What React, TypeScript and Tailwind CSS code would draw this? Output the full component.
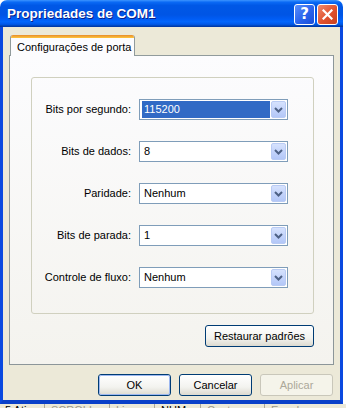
import React from 'react';

const rows = [
  { label: 'Bits por segundo:', value: '115200', selected: true },
  { label: 'Bits de dados:', value: '8' },
  { label: 'Paridade:', value: 'Nenhum' },
  { label: 'Bits de parada:', value: '1' },
  { label: 'Controle de fluxo:', value: 'Nenhum' },
];

const Combo: React.FC<{ value: string; selected?: boolean }> = ({ value, selected }) => (
  <div className="flex h-[21px] w-[149px] items-center border border-[#7f9db9] bg-white p-px">
    <div className="flex h-full flex-1 items-center pl-px">
      <span
        className={
          selected
            ? 'flex h-[17px] w-full items-center bg-[#316ac5] pl-[2px] text-white'
            : 'flex h-[17px] w-full items-center pl-[2px] text-black'
        }
      >
        {value}
      </span>
    </div>
    <div className="ml-px flex h-[17px] w-[15px] items-center justify-center rounded-[2px] border border-[#b9cbf4] bg-[linear-gradient(to_bottom,#d6e2fd,#c0d1fa_60%,#b3c7f7)]">
      <svg width="9" height="6" viewBox="0 0 9 6">
        <path d="M1 1 L4.5 4.5 L8 1" fill="none" stroke="#4d6185" strokeWidth="2" />
      </svg>
    </div>
  </div>
);

const XpButton: React.FC<{ children: React.ReactNode; width: string; primary?: boolean; disabled?: boolean }> = ({
  children,
  width,
  primary,
  disabled,
}) => {
  if (disabled) {
    return (
      <div className={`${width} flex h-[22px] items-center justify-center rounded-[3px] border border-[#c9c7ba] bg-[#f5f4ea] text-[#aca899]`}>
        {children}
      </div>
    );
  }
  return (
    <div className={`${width} h-[22px] rounded-[3px] border border-[#003c74] bg-[linear-gradient(to_bottom,#ffffff,#f3f3ef_60%,#dcdad0)]`}>
      <div
        className={
          primary
            ? 'flex h-full items-center justify-center rounded-[2px] border-[1.5px] border-[#9db8f0] text-black'
            : 'flex h-full items-center justify-center text-black'
        }
      >
        {children}
      </div>
    </div>
  );
};

export default function App() {
  return (
    <div className="h-[408px] w-[346px] overflow-hidden bg-white font-['Liberation_Sans',Arial,sans-serif] text-[11px] leading-none">
      <div className="w-[343px]">
        {/* Title bar */}
        <div className="flex h-[27px] items-center rounded-t-[7px] bg-[linear-gradient(to_bottom,#3d95ff_0%,#0a6af5_8%,#0058e6_20%,#0055e5_55%,#005cf4_70%,#0266fc_80%,#0058e8_90%,#0043b5_96%,#0031a0_100%)] pl-[7px] pr-[5px]">
          <span className="flex-1 text-[13.5px] font-bold text-white [text-shadow:1px_1px_0_#0a1f8a]">
            Propriedades de COM1
          </span>
          <div className="flex gap-[2px] pt-[1px]">
            <div className="flex h-[21px] w-[21px] items-center justify-center rounded-[3px] border border-white bg-[linear-gradient(135deg,#5a8ffc,#2a63ec_55%,#1a4ed8)] font-['DejaVu_Sans',sans-serif] text-[15px] font-bold text-white">
              ?
            </div>
            <div className="flex h-[21px] w-[21px] items-center justify-center rounded-[3px] border border-white bg-[linear-gradient(135deg,#f08a6c,#e0512e_55%,#c8401e)]">
              <svg width="11" height="11" viewBox="0 0 11 11">
                <path d="M1.5 1.5 L9.5 9.5 M9.5 1.5 L1.5 9.5" stroke="white" strokeWidth="2.2" strokeLinecap="square" />
              </svg>
            </div>
          </div>
        </div>

        {/* Window body with frame */}
        <div className="flex h-[377px] flex-col border-x-[3px] border-b-[4px] border-x-[#0a49e0] border-b-[#0a40c8] bg-[#ece9d8]">
          <div className="px-[6px] pt-[8px]">
            {/* Tab */}
            <div className="relative z-10 -mb-px ml-px flex h-[21px] w-[125px] flex-col overflow-hidden rounded-t-[3px] border-x border-[#919b9c] bg-[#fcfcfe]">
              <div className="h-[3px] bg-[linear-gradient(to_bottom,#e68b2c,#ffc73c)]" />
              <div className="flex flex-1 items-center pl-[6px] text-black">Configurações de porta</div>
            </div>

            {/* Tab panel */}
            <div className="flex h-[310px] w-[325px] flex-col border border-[#919b9c] border-b-[#8c9699] border-r-[#8c9699] bg-[linear-gradient(to_bottom,#fcfcfe,#f4f3ee)] pl-[21px] pt-[21px]">
              <div className="flex h-[237px] w-[283px] flex-col gap-[21px] rounded-[3px] border border-[#d0d0bf] pt-[21px]">
                {rows.map((row) => (
                  <div key={row.label} className="flex items-center">
                    <span className="w-[99px] text-right text-black">{row.label}</span>
                    <div className="ml-[8px]">
                      <Combo value={row.value} selected={row.selected} />
                    </div>
                  </div>
                ))}
              </div>
              <div className="mt-[11px] flex w-[283px] justify-end">
                <XpButton width="w-[109px]">Restaurar padrões</XpButton>
              </div>
            </div>

            {/* Dialog buttons */}
            <div className="mt-[9px] flex justify-end gap-[8px] pr-px">
              <XpButton width="w-[73px]" primary>
                OK
              </XpButton>
              <XpButton width="w-[73px]">Cancelar</XpButton>
              <XpButton width="w-[73px]" disabled>
                Aplicar
              </XpButton>
            </div>
          </div>
        </div>
      </div>

      {/* Status bar of window behind */}
      <div className="flex h-[4px] w-[346px] overflow-hidden bg-[#ece9d8] text-[11px]">
        <span className="w-[45px] border-r border-[#aca899] pl-[5px] pt-px text-black">5 Ativo</span>
        <span className="w-[65px] border-r border-[#aca899] pl-[6px] pt-px text-[#9a988c]">SCROLL</span>
        <span className="w-[45px] border-r border-[#aca899] pl-[6px] pt-px text-[#9a988c]">Lims</span>
        <span className="w-[46px] border-r border-[#aca899] pl-[6px] pt-px text-black">NUM</span>
        <span className="w-[64px] border-r border-[#aca899] pl-[6px] pt-px text-[#9a988c]">Capturar</span>
        <span className="flex-1 pl-[6px] pt-px text-[#9a988c]">Eco da impressora</span>
      </div>
    </div>
  );
}
